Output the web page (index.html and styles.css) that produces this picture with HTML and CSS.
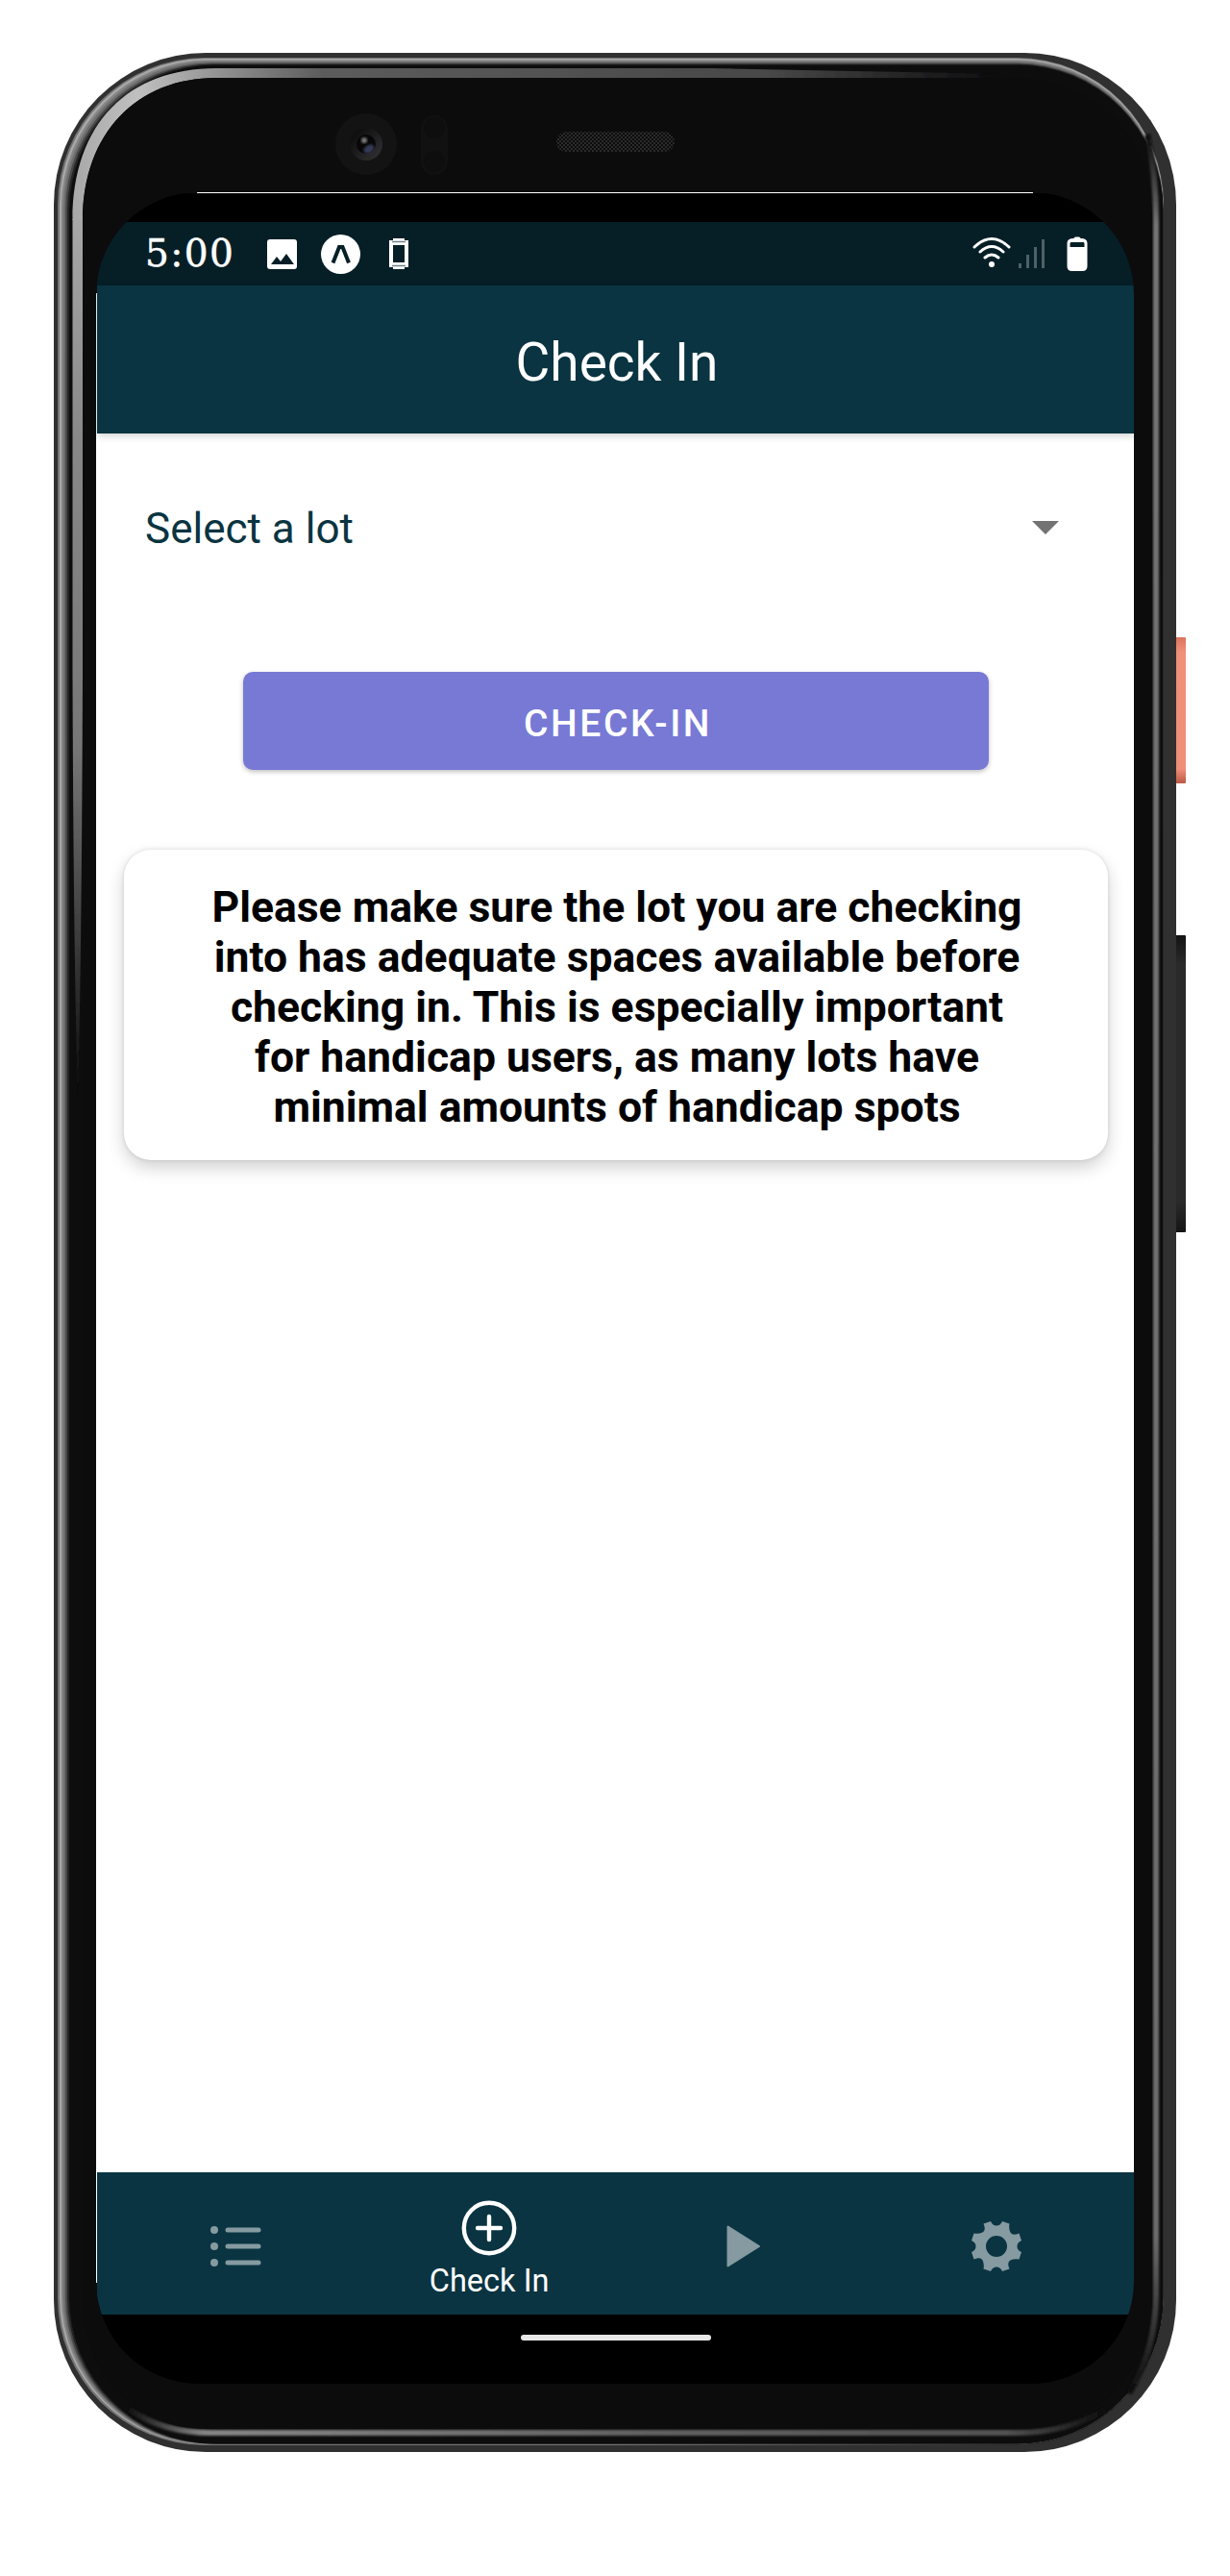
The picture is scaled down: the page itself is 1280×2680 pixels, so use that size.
FILE: index.html
```html
<!DOCTYPE html>
<html lang="en">
<head>
<meta charset="utf-8">
<title>Check In</title>
<link rel="stylesheet" href="styles.css">
</head>
<body>
<div class="device">
  <svg class="shell" viewBox="0 0 1280 2680" aria-hidden="true">
    <defs>
      <linearGradient id="fadeRight" gradientUnits="userSpaceOnUse" x1="76" y1="0" x2="1040" y2="0"><stop offset="0" stop-color="#a8a8a8"/><stop offset=".07" stop-color="#c0c0c0"/><stop offset=".17" stop-color="#8c8c8c"/><stop offset=".27" stop-color="#5c5c5c"/><stop offset=".75" stop-color="#484848"/><stop offset="1" stop-color="#0c0c0d"/></linearGradient>
      <linearGradient id="fadeDown" gradientUnits="userSpaceOnUse" x1="0" y1="228" x2="0" y2="1140"><stop offset="0" stop-color="#a8a8a8"/><stop offset=".25" stop-color="#888"/><stop offset=".6" stop-color="#777"/><stop offset="1" stop-color="#0c0c0d"/></linearGradient>
      <linearGradient id="side" gradientUnits="userSpaceOnUse" x1="0" y1="140" x2="0" y2="2490"><stop offset="0" stop-color="#0c0c0d"/><stop offset=".04" stop-color="#747474"/><stop offset=".93" stop-color="#6c6c6c"/><stop offset="1" stop-color="#0c0c0d"/></linearGradient>
      <linearGradient id="base" gradientUnits="userSpaceOnUse" x1="130" y1="0" x2="1150" y2="0"><stop offset="0" stop-color="#0c0c0d"/><stop offset=".08" stop-color="#858585"/><stop offset=".55" stop-color="#606060"/><stop offset=".9" stop-color="#525252"/><stop offset="1" stop-color="#0c0c0d"/></linearGradient>
      <linearGradient id="rim" gradientUnits="userSpaceOnUse" x1="900" y1="2250" x2="1180" y2="2500"><stop offset="0" stop-color="#747474"/><stop offset="1" stop-color="#1c1c1c"/></linearGradient>
      <linearGradient id="power" x1="0" y1="0" x2="0" y2="1"><stop offset="0" stop-color="#dc735d"/><stop offset=".1" stop-color="#f09079"/><stop offset=".9" stop-color="#ef8f78"/><stop offset="1" stop-color="#bd5747"/></linearGradient>
      <linearGradient id="volume" x1="0" y1="0" x2="0" y2="1"><stop offset="0" stop-color="#141414"/><stop offset=".1" stop-color="#2a2a2a"/><stop offset=".9" stop-color="#2a2a2a"/><stop offset="1" stop-color="#141414"/></linearGradient>
      <linearGradient id="lens" x1="0" y1="0" x2="1" y2="1"><stop offset=".2" stop-color="#101011"/><stop offset="1" stop-color="#343436"/></linearGradient>
      <pattern id="mesh" width="4" height="4" patternUnits="userSpaceOnUse"><path fill="#2b2b2b" d="M0 0h2v2H0zM2 2h2v2H2z"/></pattern>
      <filter id="soft"><feGaussianBlur stdDeviation="1"/></filter>
      <filter id="edge" filterUnits="userSpaceOnUse" x="50" y="50" width="1180" height="2510"><feGaussianBlur stdDeviation=".7"/></filter>
    </defs>
    <rect x="1220" y="663" width="14" height="152" rx="1" fill="url(#power)"/>
    <rect x="1220" y="973" width="14" height="309" rx="1" fill="url(#volume)"/>
    <rect x="56" y="55" width="1168" height="2496" rx="158" fill="#303030"/>
    <rect x="60" y="60" width="1151" height="2484" rx="153" fill="url(#rim)"/>
    <g filter="url(#edge)">
      <rect x="62" y="61" width="1148.500" height="2481.500" rx="152" fill="#a8a8a8"/>
      <rect x="64" y="62.500" width="1146.500" height="2480" rx="152" fill="#858585"/>
      <rect x="66" y="64" width="1144.500" height="2478.500" rx="152" fill="#6e6e6e"/>
      <rect x="68" y="65.500" width="1142.500" height="2477" rx="152" fill="#4a4a4b"/>
      <rect x="70" y="66.500" width="1140.500" height="2476" rx="152" fill="#262627"/>
      <rect x="72" y="67.500" width="1138.500" height="2475" rx="152" fill="#0e0e0f"/>
    </g>
    <path d="M75.500 228H86V700Q85 1000 81 1140Q76.500 1000 75.500 700Z" fill="url(#fadeDown)" filter="url(#edge)"/>
    <path d="M75.500 229C75.500 128 134 71 225 71H740L1040 77V81H225C143 81 86 138 86 229Z" fill="url(#fadeRight)" filter="url(#edge)"/>
    <g fill="none" filter="url(#soft)">
      <path stroke="url(#side)" stroke-width="6" d="M1194 140Q1203 180 1203 230V2386Q1203 2445 1175 2490"/>
      <path stroke="url(#base)" stroke-width="6" d="M135 2507Q170 2531 220 2531H1060Q1110 2531 1150 2507"/>
    </g>
    <path d="M86 2300V230C86 138 143 81 225 81H1050C1140 81 1199 140 1199 230V2386C1199 2470 1140 2527 1060 2527H215C140 2527 86 2470 86 2386Z" fill="#0c0c0d"/>
    <circle cx="381" cy="150" r="32" fill="#131313"/>
    <circle cx="381" cy="150" r="17" fill="url(#lens)"/>
    <circle cx="381" cy="150" r="10" fill="#070708"/>
    <ellipse cx="384" cy="155" rx="6" ry="4" transform="rotate(-30 384 155)" fill="#343b56" filter="url(#soft)"/>
    <circle cx="379" cy="146" r="3" fill="#777" filter="url(#soft)"/>
    <rect x="438" y="120" width="28" height="62" rx="14" fill="#111112"/>
    <circle cx="452" cy="133" r="11" fill="#0e0e0f"/><circle cx="452" cy="168" r="11" fill="#0e0e0f"/>
    <rect x="579" y="137" width="123" height="21" rx="10" fill="#0c0c0c"/>
    <rect x="579" y="137" width="123" height="21" rx="10" fill="url(#mesh)"/>
  </svg>

  <div class="screen">
    <div class="cutout"></div>
    <div class="status">
      <span class="clock">5:00</span>
      <svg class="notices" width="162" height="66" viewBox="0 0 162 66">
        <rect x="1" y="18" width="31" height="31" rx="3" fill="#fff"/><path d="M5 44l6-8 4 5 6-8 8 11z" fill="#061f27"/>
        <circle cx="77.500" cy="33.500" r="20.500" fill="#fff"/><path d="M69.500 42.500 76 26h3.500L86 42.500" fill="none" stroke="#061f27" stroke-width="4"/>
        <path fill="#fff" fill-rule="evenodd" d="M128 19h4v-2h12v2h4v28h-4v2h-12v-2h-4zM132 24v18h12V24z"/><path d="M131 20.500h14M131 45.500h14" stroke="#71848a" stroke-width="1.500"/>
      </svg>
      <svg class="signals" width="120" height="66" viewBox="0 0 120 66">
        <g fill="none" stroke="#fff" stroke-width="3" stroke-linecap="round"><path d="M2 26Q20 9 38 26M8 31Q20 20 32 31M13 37Q20 31 27 37"/></g><circle cx="20" cy="44" r="3" fill="#fff"/>
        <g fill="#4f6067"><path d="M48 43h3v5h-3zM56 34h3v14h-3zM64 26h3v22h-3zM72 18h3v30h-3z"/></g>
        <path fill="#fff" fill-rule="evenodd" d="M105.500 17q0-1.500 2-1.500h3q2 0 2 1.500 7 0 7 5v24q0 5-5 5h-11q-5 0-5-5V22q0-5 7-5zm-3 4q-1 0-1 1.500V26h15v-3.500q0-1.500-1-1.500z"/>
      </svg>
    </div>
    <header class="header">Check In</header>
    <main class="content">
      <div class="select"><span>Select a lot</span><svg width="28" height="14" viewBox="0 0 28 14"><path d="M0 0h28L14 14z" fill="#737373"/></svg></div>
      <button class="button">CHECK-IN</button>
      <section class="notice">Please make sure the lot you are checking<br>into has adequate spaces available before<br>checking in. This is especially important<br>for handicap users, as many lots have<br>minimal amounts of handicap spots</section>
    </main>
    <nav class="tabs">
      <a class="tab"><svg width="54" height="44" viewBox="0 0 54 44"><g fill="#859aa1"><circle cx="5" cy="5" r="4"/><circle cx="5" cy="22" r="4"/><circle cx="5" cy="39" r="4"/></g><path d="M19 5h32M19 22h32M19 39h32" stroke="#859aa1" stroke-width="5" stroke-linecap="round"/></svg></a>
      <a class="tab tab-active"><svg width="58" height="58" viewBox="0 0 58 58" fill="none" stroke="#fff" stroke-width="4.400" stroke-linecap="round"><circle cx="29" cy="29" r="26.200"/><path d="M17 29h24M29 17v24"/></svg><span>Check In</span></a>
      <a class="tab tab-play"><svg width="36" height="44" viewBox="0 0 36 44"><path d="M1.500 1.500v41L34 22z" fill="#859aa1" stroke="#859aa1" stroke-width="2" stroke-linejoin="round"/></svg></a>
      <a class="tab tab-settings"><svg width="54" height="54" viewBox="-27 -27 54 54"><path fill="#859aa1" fill-rule="evenodd" d="M-13.500-23.500-6-26Q-4-21.500 0-21.500T6-26L13.500-23.500Q12.500-18.500 14.500-14.500T23.500-13.500L26-6Q21.500-4 21.500 0T26 6L23.500 13.500Q18.500 12.500 14.500 14.500T13.500 23.500L6 26Q4 21.500 0 21.500T-6 26L-13.500 23.500Q-12.500 18.500-14.500 14.500T-23.500 13.500L-26 6Q-21.500 4-21.500 0T-26-6L-23.500-13.500Q-18.500-12.500-14.500-14.500T-13.500-23.500zM0-11A11 11 0 1 0 0 11 11 11 0 1 0 0-11z"/></svg></a>
    </nav>
    <div class="gesture"><span></span></div>
  </div>
</div>
</body>
</html>
```
FILE: styles.css
```css
* { box-sizing: border-box; }
body { margin: 0; background: #fff; font-family: Roboto, sans-serif; }
.device { position: relative; width: 1280px; height: 2680px; padding: 200px 100px; }
.shell { position: absolute; inset: 0; width: 1280px; height: 2680px; }
.screen { position: relative; width: 1080px; height: 2280px; display: flex; flex-direction: column; overflow: hidden; border-radius: 107px; background: linear-gradient(#fff, #fff) top / 870px 1px no-repeat, linear-gradient(#fff, #fff) left / 1px 2070px no-repeat; padding: 1px 0 0 1px; }
.cutout { height: 30px; background: #000; }
.status { height: 66px; display: flex; align-items: center; background: #061f27; color: #fff; padding: 0 48px 0 50px; }
.clock { width: 126px; font: 39px/66px "DejaVu Serif", serif; letter-spacing: 1.4px; -webkit-text-stroke: .5px #fff; }
.notices { flex: none; }
.signals { flex: none; margin-left: auto; }
.header { height: 154px; background: #0a3441; color: #fff; font-size: 55px; line-height: 160px; padding-left: 3px; text-align: center; box-shadow: 0 2px 8px rgba(0,0,0,.2); z-index: 1; }
.content { flex: 1; display: flex; flex-direction: column; align-items: center; padding-top: 60px; background: #fff; }
.select { width: 1079px; height: 76px; display: flex; align-items: center; justify-content: space-between; padding: 0 78px 0 50px; color: #0a3441; font-size: 44px; }
.select span { padding-top: 2px; }
.button { width: 776px; height: 102px; margin-top: 112px; padding: 7px 0 0 5px; border: 0; border-radius: 10px; background: #7779d5; color: #fff; font: 500 39px/1 Roboto, sans-serif; letter-spacing: 2.6px; box-shadow: 0 2px 5px rgba(0,0,0,.25); }
.notice { width: 1024px; height: 323px; margin-top: 83px; padding: 34px 0 0 3px; border-radius: 28px; color: #000; font-size: 44.5px; font-weight: 700; line-height: 52px; text-align: center; box-shadow: 0 8px 18px rgba(0,0,0,.18), 0 0 4px rgba(0,0,0,.12); }
.tabs { height: 148px; display: grid; grid-template-columns: repeat(4, 1fr); background: #0a3441; color: #fff; }
.tab { display: flex; flex-direction: column; align-items: center; justify-content: center; padding: 6px 0 0 18px; }
.tab-active { padding: 12px 0 0 7px; font-size: 32.5px; line-height: 38px; gap: 7px; }
.tab-play { padding: 6px 3px 0 0; }
.tab-settings { padding: 6px 16px 0 0; }
.gesture { height: 72px; background: #000; padding-top: 21px; }
.gesture span { display: block; width: 198px; height: 6px; margin: 0 auto; border-radius: 3px; background: #e8e8e8; }
```
